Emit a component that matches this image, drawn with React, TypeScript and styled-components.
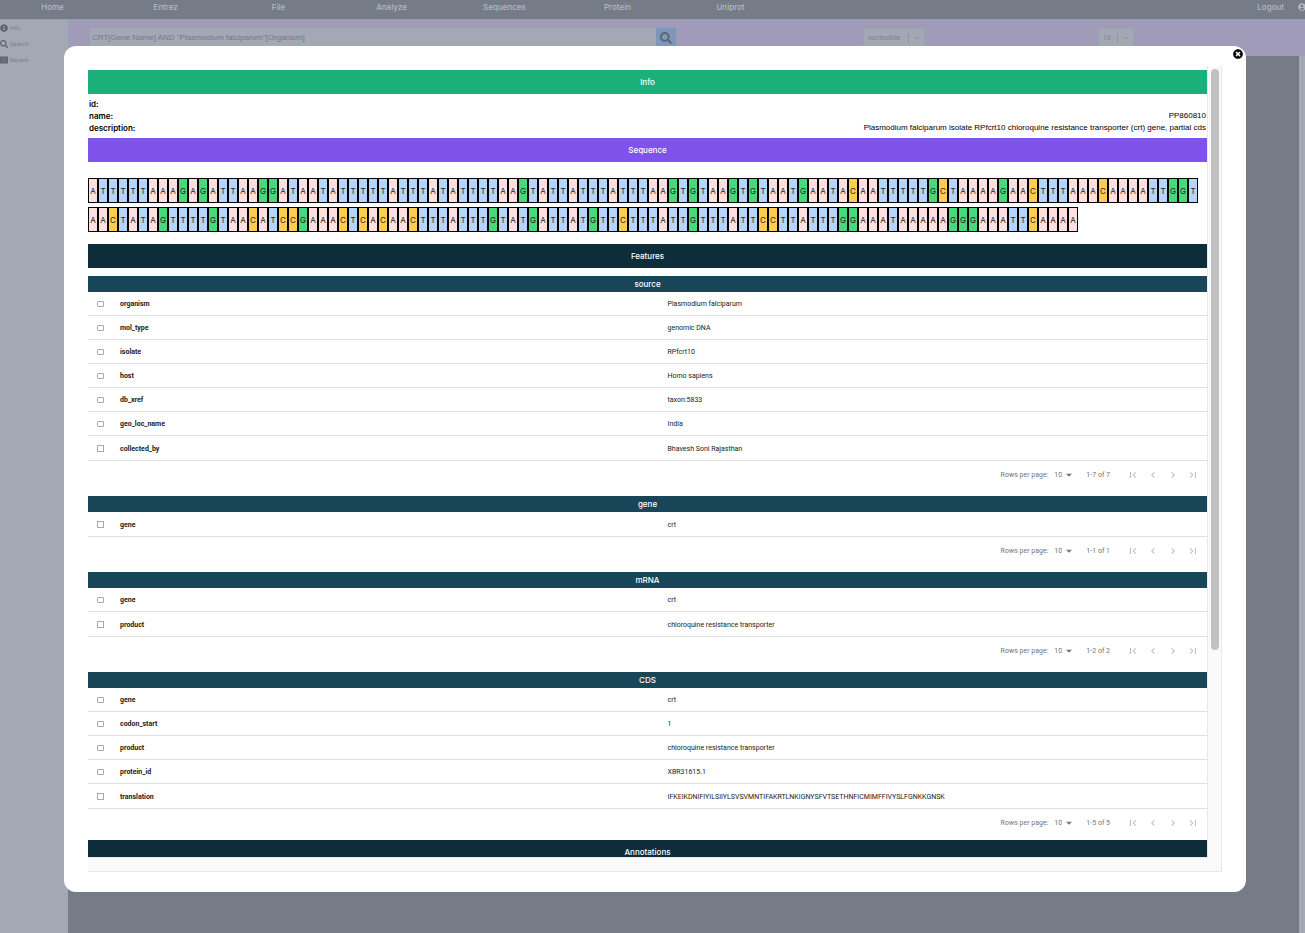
import React from "react";
import styled, { createGlobalStyle } from "styled-components";
import { FaInfoCircle, FaSearch, FaUserCircle, FaTimesCircle } from "react-icons/fa";
import { MdArrowDropDown, MdChevronLeft, MdChevronRight, MdFirstPage, MdLastPage } from "react-icons/md";

const GlobalStyle = createGlobalStyle`
  * { box-sizing: border-box; }
  html, body, #root { height: 100%; }
  body {
    margin: 0;
    overflow: hidden;
    font-family: Inter, "Liberation Sans", sans-serif;
    font-size: 8px;
    line-height: 12px;
    color: #000;
  }
  button, input, select { font: inherit; color: inherit; margin: 0; }
`;

const Page = styled.div`
  display: flex;
  flex-direction: column;
  height: 100%;
  background: #757b87;
`;

const NavBar = styled.nav`
  display: flex;
  align-items: center;
  justify-content: space-between;
  flex: none;
  height: 20px;
  padding: 0 0 5px;
  overflow: hidden;
  background: #757b87;
  border-bottom: 1px solid #989fab;
`;

const NavGroup = styled.div`
  display: flex;
  align-items: center;
  gap: 48px;
  padding-left: 20px;
`;

const AccountGroup = styled.div`
  display: flex;
  align-items: center;
  gap: 14px;
`;

const NavLink = styled.a`
  min-width: 65px;
  color: #b4bac5;
  font-weight: 500;
  text-align: center;
  text-decoration: none;
  ${AccountGroup} & { min-width: 0; }
`;

const UserButton = styled.button`
  display: flex;
  width: 7px;
  padding: 0;
  border: 0;
  background: none;
  color: #b4bac5;
  svg { flex: none; }
`;

const Body = styled.div`
  display: flex;
  flex: 1;
  min-height: 0;
`;

const Sidebar = styled.aside`
  display: flex;
  flex-direction: column;
  gap: 4px;
  flex: none;
  width: 68px;
  padding-top: 2px;
  background: #a2a8b4;
`;

const SideLink = styled.a`
  display: flex;
  align-items: center;
  gap: 2px;
  color: #7c838e;
  font-family: Roboto, sans-serif;
  font-size: 6px;
  text-decoration: none;
  svg { color: #5e646f; }
`;

const Main = styled.main`
  display: flex;
  flex-direction: column;
  flex: 1;
`;

const SearchBar = styled.form`
  display: grid;
  grid-template-columns: 795fr 235fr 207fr;
  align-items: start;
  flex: none;
  height: 36px;
  padding-top: 8px;
  background: #9f9bb8;
`;

const SearchGroup = styled.div`
  display: flex;
  height: 20px;
  padding: 0 187px 0 22px;
`;

const SearchInput = styled.input`
  flex: 1;
  min-width: 0;
  padding: 0 2px;
  border: 0;
  background: #a2a8b4;
  color: #737985;
  font-family: "Liberation Sans", sans-serif;
`;

const SearchButton = styled.button`
  display: grid;
  place-items: center;
  width: 20px;
  padding: 0;
  border: 0;
  background: #7d96ba;
  color: #5d6673;
`;

const Picker = styled.label<{ $width: number }>`
  display: flex;
  align-items: center;
  width: ${(p) => p.$width}px;
  height: 20px;
  padding: 0 3px 0 4px;
  background: #a2a8b4;
  color: #7c838e;
  font-family: Roboto, sans-serif;
  font-size: 7px;
  border: 1px solid #9ba1ad;
  svg { flex: none; margin-left: 4px; }
`;

const PickerSelect = styled.select`
  appearance: none;
  flex: 1;
  min-width: 0;
  height: 10px;
  padding: 0;
  border: 0;
  border-right: 1px solid #8f96a2;
  background: none;
  line-height: 10px;
`;

const PageEdge = styled.div`
  flex: 1;
  border-right: 6px solid #a2a8b4;
`;

const Overlay = styled.div`
  position: fixed;
  inset: 0;
  display: flex;
  padding: 46px 59px 41px 64px;
`;

const Dialog = styled.section`
  position: relative;
  display: flex;
  flex: 1;
  min-width: 0;
  padding: 20px 24px;
  border-radius: 12px;
  background: #fff;
`;

const CloseButton = styled.button`
  position: absolute;
  top: 3px;
  right: 3px;
  display: flex;
  padding: 0;
  border: 0;
  background: none;
  color: #000;
`;

const ScrollFrame = styled.div`
  display: grid;
  grid-template-columns: minmax(0, 1fr) 15px;
  grid-template-rows: minmax(0, 1fr) 15px;
  flex: 1;
  min-width: 0;
`;

const Record = styled.div`
  overflow: hidden;
  padding-top: 4px;
`;

const VerticalTrack = styled.div`
  padding: 3px;
  border: solid #e8e8e8;
  border-width: 0 1px;
  background: #fafafa;
`;

const Thumb = styled.div`
  width: 8px;
  height: 74%;
  border-radius: 4px;
  background: #c1c1c1;
`;

const HorizontalTrack = styled.div`
  border: solid #e8e8e8;
  border-width: 1px 0;
  background: #fafafa;
`;

const TrackCorner = styled.div`
  border: solid #e8e8e8;
  border-width: 0 1px 1px 0;
  background: #fafafa;
`;

const Banner = styled.h2<{ $color: string }>`
  margin: 0;
  height: 24px;
  line-height: 24px;
  background: ${(p) => p.$color};
  color: #fff;
  font-size: 8px;
  font-weight: 500;
  text-align: center;
`;

const Details = styled.dl`
  margin: 0;
  padding: 4px 0;
`;

const Detail = styled.div`
  display: flex;
  justify-content: space-between;
  height: 12px;
  padding: 0 1px;
  dt { font-weight: 600; }
  dd { margin: 0; font-family: "Liberation Sans", sans-serif; }
`;

const Sequence = styled.div`
  display: flex;
  flex-wrap: wrap;
  row-gap: 4px;
  padding: 16px 0 12px;
`;

const baseColors: Record<string, string> = {
  A: "#ffdfdf",
  T: "#b5d5fd",
  G: "#47da7d",
  C: "#fdcd51",
};

const Base = styled.span<{ $base: string }>`
  width: 10px;
  height: 25px;
  border: 1px solid #000;
  background: ${(p) => baseColors[p.$base]};
  color: #222;
  line-height: 24px;
  text-align: center;
`;

const FeatureList = styled.div`
  display: flex;
  flex-direction: column;
  gap: 7px;
  padding: 8px 0 3px;
`;

const FeatureTitle = styled.h3`
  margin: 0;
  height: 16px;
  line-height: 16px;
  background: #184557;
  color: #fff;
  font-size: 8px;
  font-weight: 500;
  text-align: center;
`;

const Table = styled.table`
  width: 100%;
  table-layout: fixed;
  border-collapse: separate;
  border-spacing: 0;
  font-family: Roboto, sans-serif;
  font-size: 7px;
  color: #212121;
  tr { height: 24px; }
  tr:last-child { height: 25px; }
  th, td {
    padding: 0 8px;
    border-bottom: 1px solid #dfdfdf;
    text-align: left;
    white-space: nowrap;
  }
  tr:last-child > * + * { padding-top: 2px; }
  th { font-weight: 700; }
`;

const SelectCol = styled.col`
  width: 24px;
`;

const Check = styled.input`
  appearance: none;
  display: block;
  width: 7px;
  height: 6px;
  margin: 0 1px;
  border: 1px solid #a8a8a8;
  border-radius: 1px;
  tr:last-child & { height: 7px; border-radius: 0; }
`;

const Pagination = styled.div`
  display: flex;
  align-items: center;
  justify-content: flex-end;
  height: 28px;
  padding-right: 4px;
  font-family: Roboto, sans-serif;
  font-size: 7px;
  color: #757575;
`;

const RowsLabel = styled.label`
  display: flex;
  align-items: center;
  gap: 6px;
`;

const RowsSelect = styled.select`
  appearance: none;
  width: 8px;
  padding: 0;
  border: 0;
  background: none;
`;

const Arrow = styled(MdArrowDropDown)`
  margin-left: -6px;
`;

const Range = styled.span`
  margin: 0 13px 0 10px;
`;

const PageButton = styled.button`
  display: grid;
  place-items: center;
  width: 20px;
  height: 20px;
  padding: 0;
  border: 0;
  background: none;
  color: #bdbdbd;
`;

const navItems = ["Home", "Entrez", "File", "Analyze", "Sequences", "Protein", "Uniprot"];

const bases =
  "ATTTTTAAAGAGATTAAGGATAATATTTTTATTTATATTTTAAGTATTATTTATTTAAGTGTAAGTGTAATGAATACAATTTTTGCTAAAAGAACTTTAAACAAAATTGGT" +
  "AACTATAGTTTTGTAACATCCGAAACTCACAACTTTATTTGTATGATTATGTTCTTTATTGTTTATTCCTTATTTGGAAATAAAAAGGGAAATTCAAAA";

type FeatureData = { title: string; rows: [string, string][] };

const features: FeatureData[] = [
  {
    title: "source",
    rows: [
      ["organism", "Plasmodium falciparum"],
      ["mol_type", "genomic DNA"],
      ["isolate", "RPfcrt10"],
      ["host", "Homo sapiens"],
      ["db_xref", "taxon:5833"],
      ["geo_loc_name", "India"],
      ["collected_by", "Bhavesh Soni Rajasthan"],
    ],
  },
  { title: "gene", rows: [["gene", "crt"]] },
  {
    title: "mRNA",
    rows: [
      ["gene", "crt"],
      ["product", "chloroquine resistance transporter"],
    ],
  },
  {
    title: "CDS",
    rows: [
      ["gene", "crt"],
      ["codon_start", "1"],
      ["product", "chloroquine resistance transporter"],
      ["protein_id", "XBR31615.1"],
      ["translation", "IFKEIKDNIFIYILSIIYLSVSVMNTIFAKRTLNKIGNYSFVTSETHNFICMIMFFIVYSLFGNKKGNSK"],
    ],
  },
];

function Chevron() {
  return (
    <svg width="8" height="8" viewBox="0 0 8 8" fill="none" stroke="#8a919d">
      <path d="M1.5 2.5 4 5 6.5 2.5" />
    </svg>
  );
}

function ShelfIcon() {
  return (
    <svg width="8" height="8" viewBox="0 0 8 8">
      <path fill="#5e646f" d="M0 .5h8v7H0z" />
      <path stroke="#8a919d" strokeWidth=".4" d="M1.8 1.2v5.6M3.4 1.2v5.6M4.8 1.2v5.6M6.4 1.2v5.6" />
    </svg>
  );
}

function Feature({ title, rows }: FeatureData) {
  const count = rows.length;
  return (
    <section>
      <FeatureTitle>{title}</FeatureTitle>
      <Table>
        <colgroup>
          <SelectCol />
          <col />
          <col />
        </colgroup>
        <tbody>
          {rows.map(([key, value]) => (
            <tr key={key}>
              <td>
                <Check type="checkbox" aria-label={`Select ${key}`} />
              </td>
              <th scope="row">{key}</th>
              <td>{value}</td>
            </tr>
          ))}
        </tbody>
      </Table>
      <Pagination>
        <RowsLabel>
          Rows per page:
          <RowsSelect defaultValue="10">
            <option>10</option>
          </RowsSelect>
          <Arrow size={14} />
        </RowsLabel>
        <Range>{`1-${count} of ${count}`}</Range>
        <PageButton type="button" aria-label="First page"><MdFirstPage size={12} /></PageButton>
        <PageButton type="button" aria-label="Previous page"><MdChevronLeft size={12} /></PageButton>
        <PageButton type="button" aria-label="Next page"><MdChevronRight size={12} /></PageButton>
        <PageButton type="button" aria-label="Last page"><MdLastPage size={12} /></PageButton>
      </Pagination>
    </section>
  );
}

export default function App() {
  return (
    <>
      <GlobalStyle />
      <Page>
        <NavBar>
          <NavGroup>
            {navItems.map((item) => (
              <NavLink key={item} href="#">{item}</NavLink>
            ))}
          </NavGroup>
          <AccountGroup>
            <NavLink href="#">Logout</NavLink>
            <UserButton type="button" aria-label="Account"><FaUserCircle size={8} /></UserButton>
          </AccountGroup>
        </NavBar>
        <Body>
          <Sidebar>
            <SideLink href="#"><FaInfoCircle size={8} />Info</SideLink>
            <SideLink href="#"><FaSearch size={8} />Search</SideLink>
            <SideLink href="#"><ShelfIcon />Recent</SideLink>
          </Sidebar>
          <Main>
            <SearchBar>
              <SearchGroup>
                <SearchInput
                  aria-label="Query"
                  defaultValue={'CRT[Gene Name] AND "Plasmodium falciparum"[Organism]'}
                />
                <SearchButton type="button" aria-label="Search"><FaSearch size={12} /></SearchButton>
              </SearchGroup>
              <Picker $width={62}>
                <PickerSelect aria-label="Database"><option>nucleotide</option></PickerSelect>
                <Chevron />
              </Picker>
              <Picker $width={36}>
                <PickerSelect aria-label="Result count"><option>10</option></PickerSelect>
                <Chevron />
              </Picker>
            </SearchBar>
            <PageEdge />
          </Main>
        </Body>
      </Page>
      <Overlay>
        <Dialog role="dialog" aria-label="Sequence record">
          <CloseButton type="button" aria-label="Close"><FaTimesCircle size={10} /></CloseButton>
          <ScrollFrame>
            <Record>
              <Banner $color="#1bb07a">Info</Banner>
              <Details>
                <Detail><dt>id:</dt><dd /></Detail>
                <Detail><dt>name:</dt><dd>PP860810</dd></Detail>
                <Detail>
                  <dt>description:</dt>
                  <dd>Plasmodium falciparum isolate RPfcrt10 chloroquine resistance transporter (crt) gene, partial cds</dd>
                </Detail>
              </Details>
              <Banner $color="#7f52eb">Sequence</Banner>
              <Sequence>
                {bases.split("").map((base, i) => (
                  <Base key={i} $base={base}>{base}</Base>
                ))}
              </Sequence>
              <Banner $color="#0e2d3a">Features</Banner>
              <FeatureList>
                {features.map((feature) => (
                  <Feature key={feature.title} {...feature} />
                ))}
              </FeatureList>
              <Banner $color="#0e2d3a">Annotations</Banner>
            </Record>
            <VerticalTrack><Thumb /></VerticalTrack>
            <HorizontalTrack />
            <TrackCorner />
          </ScrollFrame>
        </Dialog>
      </Overlay>
    </>
  );
}
